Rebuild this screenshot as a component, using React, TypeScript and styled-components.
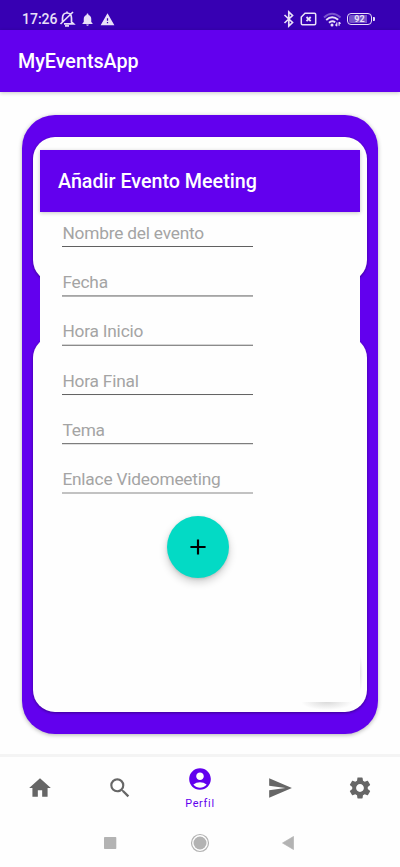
import React from "react";
import styled, { createGlobalStyle } from "styled-components";
import { MdHome, MdSearch, MdAccountCircle, MdSend, MdSettings, MdAdd, MdNotifications, MdWarning } from "react-icons/md";

const GlobalStyle = createGlobalStyle`
  * { box-sizing: border-box; }
  body { margin: 0; background: #fff; font-family: Roboto, "Liberation Sans", sans-serif; }
`;

const Screen = styled.div`
  width: 400px;
  height: 867px;
  display: flex;
  flex-direction: column;
  background: #fefefe;
  overflow: hidden;
`;

const StatusBar = styled.header`
  height: 30px;
  flex: none;
  padding: 8px 25px 0 22px;
  display: flex;
  justify-content: space-between;
  background: #3700b3;
  color: #e8e0f8;
`;

const StatusGroup = styled.div<{ $gap: number }>`
  height: 22px;
  display: flex;
  align-items: center;
  gap: ${(p) => p.$gap}px;
  svg { display: block; flex: none; }
`;

const Clock = styled.span`
  font-size: 14px;
  font-weight: 500;
  line-height: 22px;
  width: 35px;
  margin-right: -3px;
  white-space: nowrap;
`;

const TitleBar = styled.div`
  height: 62px;
  flex: none;
  padding-left: 18px;
  display: flex;
  align-items: center;
  background: #6200ee;
  color: #fff;
  font-size: 19.7px;
  font-weight: 500;
  box-shadow: 0 1px 4px rgba(0, 0, 0, 0.22);
`;

const Content = styled.main`
  flex: 1;
  padding: 23px 22px 0;
`;

const ProfileCard = styled.section`
  position: relative;
  height: 619px;
  padding: 22px 11px;
  display: flex;
  flex-direction: column;
  justify-content: space-between;
  border-radius: 33px;
  background: #6200ee;
  box-shadow: 0 1px 4px rgba(0, 0, 0, 0.3);
`;

const Panel = styled.div<{ $height: number }>`
  height: ${(p) => p.$height}px;
  border-radius: 22px;
  background: #fefefe;
  box-shadow: 0 1px 3px rgba(0, 0, 0, 0.4);
`;

const Dialog = styled.form`
  position: absolute;
  left: 18px;
  top: 35px;
  width: 320px;
  height: 552px;
  display: flex;
  flex-direction: column;
  background: #fefefe;
`;

const Fields = styled.div`
  width: 191px;
  margin-left: 22px;
  padding-top: 10px;
  display: flex;
  flex-direction: column;
`;

const Field = styled.label<{ $height: number }>`
  height: ${(p) => p.$height}px;
  display: block;
`;

const Hint = styled.span`
  display: block;
  height: 24px;
  line-height: 23px;
  font-size: 17.3px;
  font-weight: 400;
  letter-spacing: -0.2px;
  padding-left: 0.4px;
  color: #a4a4a4;
  white-space: nowrap;
`;

const Underline = styled.span<{ $top: string; $bottom: string }>`
  display: block;
  height: 2px;
  background: linear-gradient(${(p) => p.$top} 50%, ${(p) => p.$bottom} 50%);
`;

const AddButton = styled.button`
  width: 62px;
  height: 62px;
  margin: -1px 0 0 126.7px;
  padding: 0;
  display: grid;
  place-items: center;
  border: 0;
  border-radius: 50%;
  background: #03dac5;
  color: #000;
  box-shadow: 0 4px 8px rgba(0, 0, 0, 0.2), 0 1px 3px rgba(0, 0, 0, 0.12);
`;

const CornerShade = styled.span<{ $side?: boolean }>`
  position: absolute;
  left: ${(p) => (p.$side ? 338 : 279)}px;
  top: ${(p) => (p.$side ? 540 : 587)}px;
  width: ${(p) => (p.$side ? 3 : 52)}px;
  height: ${(p) => (p.$side ? 37 : 8)}px;
  background: ${(p) =>
    p.$side
      ? "radial-gradient(ellipse 3px 18px at 0 50%, #e6e6e6, rgba(254,254,254,0))"
      : "radial-gradient(ellipse 26px 8px at 50% 0, #dadada, rgba(254,254,254,0))"};
`;

const BottomNav = styled.nav`
  height: 64px;
  flex: none;
  display: grid;
  grid-template-columns: repeat(5, 80px);
  border-top: 3px solid #f4f4f4;
`;

const NavItem = styled.a<{ $active?: boolean }>`
  height: 61px;
  padding-top: ${(p) => (p.$active ? 9 : 18)}px;
  display: flex;
  flex-direction: column;
  align-items: center;
  color: ${(p) => (p.$active ? "#6200ee" : "#666")};
  svg { display: block; flex: none; }
`;

const NavLabel = styled.span`
  margin-top: 5px;
  font-size: 10.8px;
  line-height: 14px;
  letter-spacing: 0.75px;
`;

const SystemNav = styled.div`
  height: 49px;
  flex: none;
  display: grid;
  grid-template-columns: 20px 20px 20px;
  justify-content: center;
  align-items: center;
  column-gap: 69px;
  svg { display: block; overflow: visible; }
`;

const MutedBell = () => (
  <svg width="17" height="18" viewBox="0 0 17 18" fill="none" stroke="currentColor" strokeWidth="1.7">
    <path d="M3.500 12V8.200C3.500 5 5.200 3 8 3s4.500 2 4.500 5.200V12l2 1.800H5M1.500 14 14 2M8 1.500V3" />
    <path d="M6 15.900h4" />
  </svg>
);

const Bluetooth = () => (
  <svg width="12" height="18" viewBox="0 0 12 18" fill="none" stroke="currentColor" strokeWidth="1.700">
    <path d="m1.500 5 8 7.500-3.700 3.500V2l3.700 3.500-8 7.500" />
  </svg>
);

const SimOff = () => (
  <svg width="17" height="14" viewBox="0 0 17 14" fill="none" stroke="currentColor" strokeWidth="1.500">
    <path d="M5 1.300h9.500q1.200 0 1.200 1.200v9q0 1.200-1.200 1.200h-12q-1.200 0-1.200-1.200V5z" />
    <path d="m6.500 5 4.200 4.200m0-4.200L6.500 9.200" strokeWidth="1.800" />
  </svg>
);

const Wifi = () => (
  <svg width="19" height="15" viewBox="0 0 19 15" fill="none" stroke="currentColor" strokeWidth="1.900">
    <path d="M1 5.500Q9-2 17.500 5.500" opacity=".38" />
    <path d="M3.200 8Q9 2.700 15.200 7.800M6 10.700Q9 8 12.200 10.300" />
    <circle cx="9" cy="13" r="1.500" fill="currentColor" stroke="none" />
    <path d="M13.800 10.500v3.700m2.300-4.200v3.700M12.500 12.500l1.300 1.500m2.300-3.800 1.500 1.400" strokeWidth="1.200" />
  </svg>
);

const BatteryShell = styled.div`
  width: 28px;
  height: 13px;
  display: flex;
  align-items: center;
  &::after {
    content: "";
    width: 2px;
    height: 4px;
    margin-left: 1px;
    border-radius: 0 1px 1px 0;
    background: currentColor;
  }
`;

const BatteryLevel = styled.div`
  width: 25px;
  height: 12px;
  flex: none;
  padding: 1px;
  border: 1.5px solid currentColor;
  border-radius: 4px;
  background: linear-gradient(90deg, #7553ca 0 88%, #3700b3 88%) content-box;
  font-size: 9px;
  font-weight: 700;
  line-height: 8px;
  text-align: center;
`;

const fields = [
  { hint: "Nombre del evento", height: 49, top: "#606060", bottom: "#fefefe" },
  { hint: "Fecha", height: 49, top: "#a5a5a5", bottom: "#b5b5b5" },
  { hint: "Hora Inicio", height: 50, top: "#d4d4d4", bottom: "#8b8b8b" },
  { hint: "Hora Final", height: 49, top: "#646464", bottom: "#fafafa" },
  { hint: "Tema", height: 49, top: "#7d7d7d", bottom: "#e0e0e0" },
  { hint: "Enlace Videomeeting", height: 49, top: "#c2c2c2", bottom: "#c2c2c2" },
];

export default function App() {
  return (
    <>
      <GlobalStyle />
      <Screen>
        <StatusBar>
          <StatusGroup $gap={4.500}>
            <Clock>17:26</Clock>
            <MutedBell />
            <MdNotifications size={15} />
            <MdWarning size={15} />
          </StatusGroup>
          <StatusGroup $gap={5.500}>
            <Bluetooth />
            <SimOff />
            <Wifi />
            <BatteryShell><BatteryLevel>92</BatteryLevel></BatteryShell>
          </StatusGroup>
        </StatusBar>
        <TitleBar>MyEventsApp</TitleBar>
        <Content>
          <ProfileCard>
            <Panel $height={144.500} />
            <Panel $height={376} />
            <Dialog>
              <TitleBar>Añadir Evento Meeting</TitleBar>
              <Fields>
                {fields.map((f) => (
                  <Field key={f.hint} $height={f.height}>
                    <Hint>{f.hint}</Hint>
                    <Underline $top={f.top} $bottom={f.bottom} />
                  </Field>
                ))}
              </Fields>
              <AddButton type="button" aria-label="Añadir"><MdAdd size={26} /></AddButton>
            </Dialog>
            <CornerShade />
            <CornerShade $side />
          </ProfileCard>
        </Content>
        <BottomNav>
          <NavItem><MdHome size={26} /></NavItem>
          <NavItem><MdSearch size={26} /></NavItem>
          <NavItem $active><MdAccountCircle size={26} /><NavLabel>Perfil</NavLabel></NavItem>
          <NavItem><MdSend size={26} /></NavItem>
          <NavItem><MdSettings size={26} /></NavItem>
        </BottomNav>
        <SystemNav>
          <svg width="20" height="20"><rect x="3" y="4" width="12.300" height="12" rx="0.700" fill="#b3b3b3" /></svg>
          <svg width="20" height="20"><circle cx="10" cy="10" r="8.500" fill="none" stroke="#b3b3b3" strokeWidth="1.200" /><circle cx="10" cy="10" r="6.500" fill="#b3b3b3" /></svg>
          <svg width="20" height="20"><path d="M3.500 10 14.500 3.500v13z" fill="#b3b3b3" stroke="#b3b3b3" strokeWidth=".7" strokeLinejoin="round" /></svg>
        </SystemNav>
      </Screen>
    </>
  );
}
